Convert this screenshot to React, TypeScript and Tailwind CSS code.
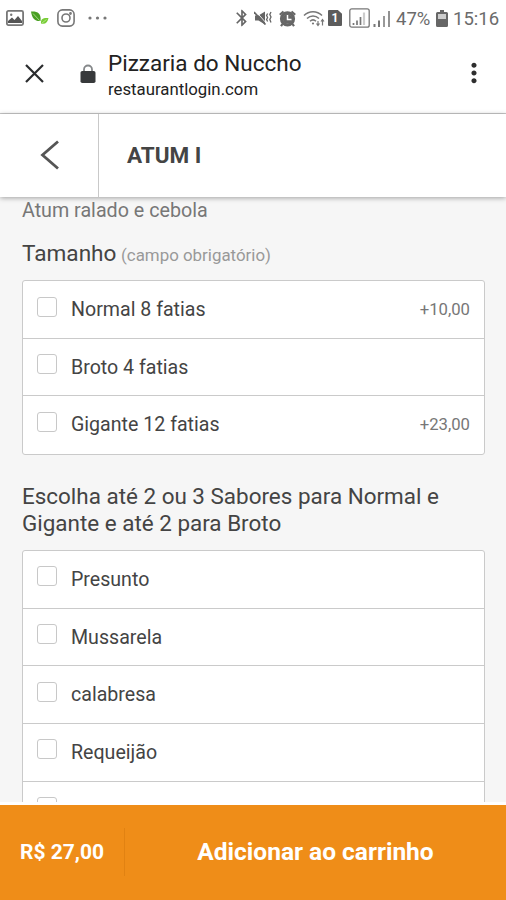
import { MdBluetooth, MdMoreVert } from "react-icons/md";

type Option = {
  name: string;
  price?: string;
};

const sizes: Option[] = [
  { name: "Normal 8 fatias", price: "+10,00" },
  { name: "Broto 4 fatias" },
  { name: "Gigante 12 fatias", price: "+23,00" },
];

const flavors: Option[] = [
  { name: "Presunto" },
  { name: "Mussarela" },
  { name: "calabresa" },
  { name: "Requeijão" },
  { name: "" },
];

const StatusBar = () => {
  return (
    <div className="flex h-9 shrink-0 items-center justify-between pl-1.5 pr-[7px] text-[#666]">
      <div className="flex items-center">
        {/* gallery */}
        <svg width="18" height="16" viewBox="0 0 18 16">
          <rect x="0.9" y="0.9" width="16.2" height="14.2" rx="1.5" fill="none" stroke="#777" strokeWidth="1.8" />
          <path d="M2 13V11L6 7.500l2.500 2.500L12 6l4 5v2z" fill="#555" />
          <circle cx="5.200" cy="4.800" r="1.200" fill="#777" />
        </svg>
        {/* leaf */}
        <svg className="ml-[7px]" width="18" height="14" viewBox="0 0 18 14">
          <path d="M0 0.500C6 0 10.500 2 9.500 10 4 10.500 1 7.500 0 0.500z" fill="#4a9f24" />
          <path d="M10 12.500C9.500 8 12 6.500 17.500 7 16.500 11.500 14.500 13.500 10 12.500z" fill="#78cc35" />
          <path d="M2 2.500 8.500 9.500M11 12l4.500-3.500" stroke="#c6efab" strokeWidth="0.700" fill="none" />
        </svg>
        {/* instagram */}
        <svg className="ml-2" width="18" height="18" viewBox="0 0 18 18" fill="none" stroke="#777" strokeWidth="1.6">
          <rect x="0.9" y="0.9" width="16.2" height="16.2" rx="4.500" />
          <circle cx="9" cy="9" r="4" />
          <circle cx="13.500" cy="4.500" r="0.600" fill="#777" />
        </svg>
        <svg className="ml-[13px]" width="20" height="4" viewBox="0 0 20 4" fill="#777">
          <circle cx="2" cy="2" r="1.600" />
          <circle cx="9.500" cy="2" r="1.600" />
          <circle cx="17" cy="2" r="1.600" />
        </svg>
      </div>

      <div className="flex items-center">
        <MdBluetooth className="-mr-0.5 size-5" />
        {/* vibrate / muted */}
        <svg className="ml-1" width="19" height="14" viewBox="0 0 19 14" fill="#666">
          <path d="M1 4.500h3.500L11 0.500v13L4.500 9.500H1z" />
          <path d="M2 0.500 13 13" stroke="#fff" strokeWidth="0.900" />
          <path d="M0 1 11.500 13.500" stroke="#666" strokeWidth="1.700" />
          <path d="M13.600 2.500l-1 2 1 2-1 2 1 2M17 1l-1.200 2.500 1.200 2.500-1.200 2.500 1.200 3" fill="none" stroke="#666" strokeWidth="1.300" />
        </svg>
        {/* alarm */}
        <svg className="ml-1.5" width="17" height="17" viewBox="0 0 17 17">
          <circle cx="8.500" cy="8.800" r="6" fill="#fff" stroke="#666" strokeWidth="3.200" />
          <path d="M0.800 4.800 4.500 1.500M16.200 4.800 12.500 1.500M3.500 14 2 16.200M13.500 14l1.500 2.200" stroke="#666" strokeWidth="2.200" />
          <circle cx="8.500" cy="8.800" r="4.800" fill="#666" />
          <path d="M8.500 5v4.500H12.500" stroke="#fff" strokeWidth="1.500" fill="none" />
        </svg>
        {/* wifi */}
        <svg className="ml-[7px]" width="22" height="17" viewBox="0 0 22 17" fill="none" stroke="#777" strokeWidth="1.500">
          <path d="M1 5.500C6 0.500 14 0.500 19 5.500M4 8.500c3.500-3.500 8.500-3.500 12 0M7 11.200c2-1.800 4-1.800 6 0" />
          <circle cx="10" cy="13.500" r="1.100" fill="#777" stroke="none" />
          <path d="M15 11v4.500M13.500 13.500l1.500 2 1.500-2M19.500 15.500V10M18 11.500l1.500-2 1.500 2" strokeWidth="1.200" />
        </svg>
        {/* sim 1 */}
        <div className="ml-[3px] flex h-4 w-3.5 items-center justify-center rounded-[1px] bg-[#5c5c5c] font-[Roboto] text-[12px] font-bold leading-none text-white [clip-path:polygon(0_0,70%_0,100%_24%,100%_100%,0_100%)]">
          1
        </div>
        <svg className="ml-[7px]" width="21" height="20" viewBox="0 0 21 20">
          <rect x="0.800" y="0.800" width="19.400" height="18.400" rx="2" fill="none" stroke="#777" strokeWidth="1.300" />
          <path d="M4.500 15v2M8 12.500V17M11.500 9v8" stroke="#777" strokeWidth="1.700" />
          <path d="M15 4.500V17" stroke="#ccc" strokeWidth="2.200" />
        </svg>
        <svg className="ml-[3px]" width="18" height="17" viewBox="0 0 18 17">
          <path d="M1.500 14v3M6 10.500V17" stroke="#777" strokeWidth="2" />
          <path d="M11 6v11" stroke="#999" strokeWidth="2" />
          <path d="M16 1v16" stroke="#777" strokeWidth="1.600" />
        </svg>
        <span className="ml-[5px] mt-0.5 w-[35px] whitespace-nowrap font-[Roboto] text-[18.500px] leading-none text-[#6b6b6b]">47%</span>
        <svg className="ml-[5px]" width="12" height="17" viewBox="0 0 12 17">
          <path d="M4 0h4v2h2.500Q12 2 12 3.500V15.500Q12 17 10.500 17h-9Q0 17 0 15.500V3.500Q0 2 1.500 2H4z" fill="#666" />
          <rect x="2" y="4" width="8" height="5" fill="#ccc" />
        </svg>
        <span className="ml-[5px] mt-0.5 w-[46px] whitespace-nowrap font-[Roboto] text-[18.500px] leading-none text-[#6b6b6b]">15:16</span>
      </div>
    </div>
  );
};

const BrowserBar = () => {
  return (
    <div className="flex h-[78px] shrink-0 border-b border-[#c9c9c9] pl-[25px] pr-[18px]">
      <svg className="mt-7" width="19" height="19" viewBox="0 0 19 19">
        <path d="M1 1l17 17M18 1L1 18" stroke="#2a2c2e" strokeWidth="2.200" />
      </svg>
      {/* padlock */}
      <svg className="ml-9 mt-7" width="16" height="20" viewBox="0 0 16 20">
        <path d="M4 8V5.500a4 4 0 0 1 8 0V8" fill="none" stroke="#85888a" strokeWidth="1.800" />
        <rect x="0.500" y="7" width="15" height="12" rx="1.800" fill="#37393b" />
      </svg>
      <div className="ml-3 mt-[13px] flex-1 whitespace-nowrap font-[Roboto]">
        <h1 className="text-[22.500px] leading-7 text-[#222]">Pizzaria do Nuccho</h1>
        <p className="text-[16.800px] leading-6 text-[#222]">restaurantlogin.com</p>
      </div>
      <MdMoreVert className="mt-[23px] size-7 scale-110 text-[#2e2e2e]" />
    </div>
  );
};

const OptionList = ({ options }: { options: Option[] }) => {
  return (
    <div className="rounded-[3px] border border-[#cacaca] bg-white">
      {options.map((option, index) => (
        <label
          key={index}
          className="flex h-[57.700px] border-b border-[#cacaca] px-[14px] last:h-[57.500px] last:border-b-0"
        >
          <span className="mt-[15.500px] size-5 rounded-[3px] border border-[#c8c8c8] bg-white" />
          <span className="ml-[14px] mt-[17px] flex-1 text-[19.600px] leading-6 text-[#444]">{option.name}</span>
          <span className="mt-[17px] text-[16.700px] leading-6 text-[#777]">{option.price}</span>
        </label>
      ))}
    </div>
  );
};

const App = () => {
  return (
    <div className="flex h-[900px] w-full flex-col overflow-hidden bg-white font-[Roboto,sans-serif]">
      <StatusBar />
      <BrowserBar />

      <header className="relative z-10 flex h-[83px] shrink-0 bg-white pb-0.5 shadow-[0_1px_5px_rgba(0,0,0,0.35)]">
        <button className="-mb-0.5 flex w-[99px] items-center border-r border-[#c9c9c9] pb-0.5 pl-10">
          <svg width="20" height="30" viewBox="0 0 20 30">
            <path d="M18 1.500 2.500 15 18 28.500" fill="none" stroke="#555" strokeWidth="2.800" />
          </svg>
        </button>
        <h2 className="ml-7 self-center text-[22.500px] font-bold leading-7 text-[#444]">ATUM I</h2>
      </header>

      <main className="h-[605px] shrink-0 overflow-hidden bg-[#f6f6f6] pl-[22px] pr-[21px] pt-0.5">
        <p className="text-[19.700px] leading-6 text-[#777]">Atum ralado e cebola</p>
        <h3 className="mt-[17px] text-[22.600px] leading-7 text-[#444]">
          Tamanho <span className="-ml-px text-[16.900px] text-[#999]">(campo obrigatório)</span>
        </h3>
        <div className="mt-[11px]">
          <OptionList options={sizes} />
        </div>

        <h3 className="mb-[13px] mt-7 whitespace-nowrap text-[22.450px] leading-[27px] text-[#444]">
          Escolha até 2 ou 3 Sabores para Normal e
          <br />
          Gigante e até 2 para Broto
        </h3>
        <OptionList options={flavors} />
      </main>

      <footer className="mt-[3px] flex flex-1 items-center bg-[#ef8d18] pb-0.5 font-bold text-white">
        <span className="h-12 w-[125px] whitespace-nowrap border-r border-[#e18212] pl-5 text-[21px] leading-[48px]">R$ 27,00</span>
        <button className="flex-1 whitespace-nowrap text-[24.500px] leading-7">Adicionar ao carrinho</button>
      </footer>
    </div>
  );
};

export default App;
